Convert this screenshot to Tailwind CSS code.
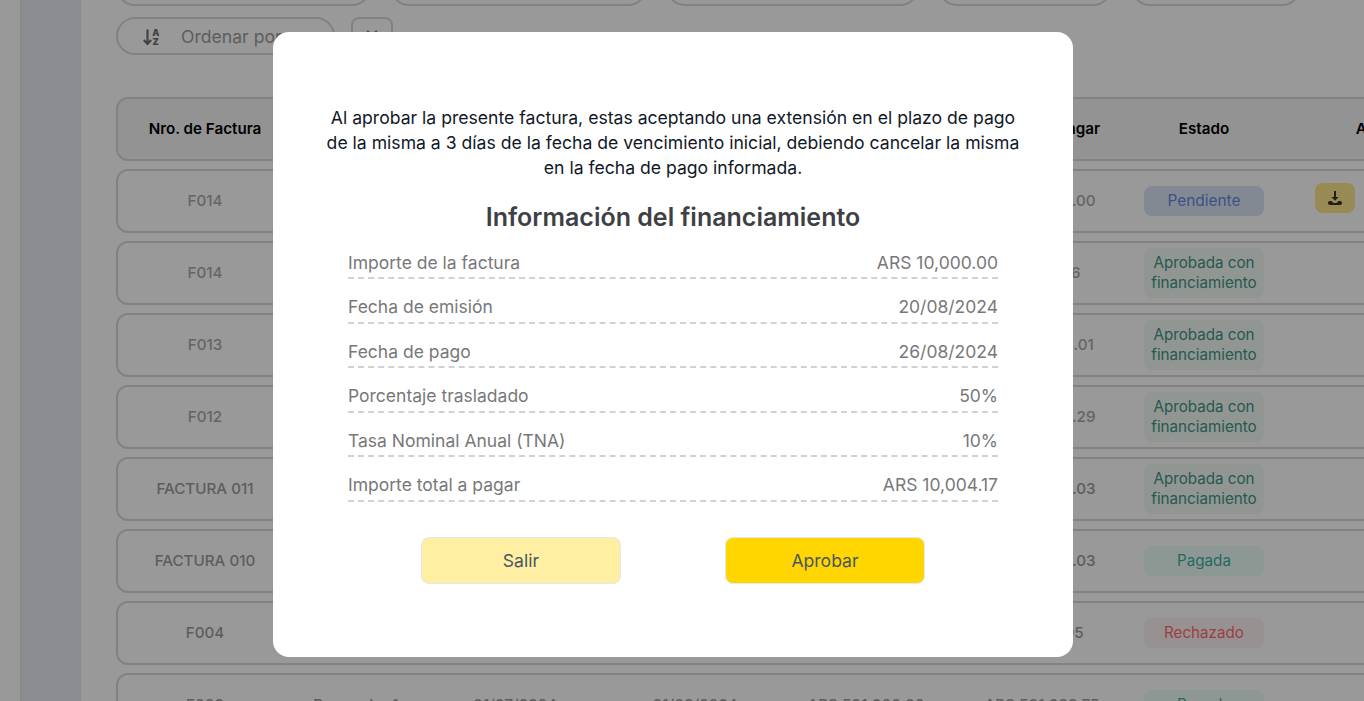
<!DOCTYPE html>
<html lang="es">
  <head>
    <meta charset="UTF-8" />
    <title>Facturas</title>
    <script src="https://cdn.jsdelivr.net/npm/@tailwindcss/browser@4"></script>
  </head>
  <body class="font-['Inter',sans-serif] bg-white">
    <div class="relative flex h-[701px] w-[1364px] overflow-hidden bg-white">
      <!-- sidebar -->
      <div class="w-[20px] shrink-0 bg-white"></div>
      <aside class="w-[61px] shrink-0 border-l border-[#dfdfdf] bg-[#e8eaf0]"></aside>

      <main class="-mt-[32px] flex-1 pl-[35px]">
        <!-- filters -->
        <div class="flex gap-[19px]">
          <div class="h-[38px] w-[255px] rounded-full border-2 border-[#d9d9d9]"></div>
          <div class="h-[38px] w-[257px] rounded-full border-2 border-[#d9d9d9]"></div>
          <div class="h-[38px] w-[253px] rounded-full border-2 border-[#d9d9d9]"></div>
          <div class="h-[38px] w-[174px] rounded-full border-2 border-[#d9d9d9]"></div>
          <div class="h-[38px] w-[170px] rounded-full border-2 border-[#d9d9d9]"></div>
        </div>
        <div class="mt-[11px] flex gap-[16px]">
          <div class="flex h-[38px] w-[219px] items-center rounded-full border-2 border-[#d9d9d9] pl-[25px] pt-[2px] text-[17.6px] text-[#9b9b9b]">
            <svg class="h-[18px] w-[18px] text-[#6e6e6e]" viewBox="0 0 18 18" fill="none">
              <path d="M4.5 1.5v14.5M0.8 12l3.7 4 3.7-4" stroke="currentColor" stroke-width="2.2" />
              <text x="9.2" y="8" font-size="9" font-weight="900" fill="currentColor">A</text>
              <text x="9.6" y="17" font-size="9" font-weight="900" fill="currentColor">Z</text>
            </svg>
            <span class="ml-[20px]">Ordenar por</span>
          </div>
          <div class="flex h-[38px] w-[42px] items-center justify-center rounded-lg border-2 border-[#d9d9d9] pb-[4px] text-2xl text-[#8a8a8a]">×</div>
        </div>

        <!-- table -->
        <div class="mt-[42px] flex w-[1390px] flex-col gap-[8px] text-[15.2px]">
          <div class="grid h-[64px] grid-cols-[174px_128px_190px_170px_172px_180px_144px_228px] items-center rounded-xl border-2 border-[#d9d9d9] bg-[#f6f6f6] text-center font-semibold text-black">
            <div>Nro. de Factura</div>
            <div>Proveedor</div>
            <div>Fecha de emisión</div>
            <div>Fecha de pago</div>
            <div>Importe</div>
            <div>Importe a pagar</div>
            <div>Estado</div>
            <div>Acciones</div>
          </div>

          <div class="grid h-[64px] grid-cols-[174px_128px_190px_170px_172px_180px_144px_228px] items-center rounded-xl border-2 border-[#d9d9d9] text-center font-medium text-[#a8a8a8]">
            <div>F014</div>
            <div>Proveedor 1</div>
            <div>20/08/2024</div>
            <div>26/08/2024</div>
            <div>ARS 10,000.00</div>
            <div>ARS 10,000.00</div>
            <div class="flex justify-center"><span class="w-[120px] shrink-0 rounded-lg bg-[#dbe4f4] py-[5px] text-[15.4px] font-normal leading-5 text-[#6488e0]">Pendiente</span></div>
            <div class="pl-[39px] text-left">
              <div class="mb-[6px] flex h-[30px] w-[40px] items-center justify-center rounded-lg bg-[#fde68a]">
                <svg class="h-[16px] w-[16px] text-[#333]" viewBox="0 0 16 16" fill="currentColor">
                  <path d="M7 1h2v6h2.6L8 10.8 4.4 7H7z" />
                  <path d="M1 13c0-1.2.8-2 2-2h1.5L6.5 13h3l2-2H13c1.2 0 2 .8 2 2s-.8 2-2 2H3c-1.2 0-2-.8-2-2z" />
                </svg>
              </div>
            </div>
          </div>

          <div class="grid h-[64px] grid-cols-[174px_128px_190px_170px_172px_180px_144px_228px] items-center rounded-xl border-2 border-[#d9d9d9] text-center font-medium text-[#a8a8a8]">
            <div>F014</div>
            <div>Proveedor 1</div>
            <div>20/08/2024</div>
            <div>26/08/2024</div>
            <div>ARS 10,000.00</div>
            <div>ARS 5,046</div>
            <div class="flex justify-center"><span class="w-[120px] shrink-0 rounded-lg bg-[#f2faf4] py-[5px] font-normal leading-5 text-[#3f9488]">Aprobada con financiamiento</span></div>
            <div></div>
          </div>

          <div class="grid h-[64px] grid-cols-[174px_128px_190px_170px_172px_180px_144px_228px] items-center rounded-xl border-2 border-[#d9d9d9] text-center font-medium text-[#a8a8a8]">
            <div>F013</div>
            <div>Proveedor 1</div>
            <div>19/08/2024</div>
            <div>25/08/2024</div>
            <div>ARS 10,000.00</div>
            <div>ARS 10,004.01</div>
            <div class="flex justify-center"><span class="w-[120px] shrink-0 rounded-lg bg-[#f2faf4] py-[5px] font-normal leading-5 text-[#3f9488]">Aprobada con financiamiento</span></div>
            <div></div>
          </div>

          <div class="grid h-[64px] grid-cols-[174px_128px_190px_170px_172px_180px_144px_228px] items-center rounded-xl border-2 border-[#d9d9d9] text-center font-medium text-[#a8a8a8]">
            <div>F012</div>
            <div>Proveedor 1</div>
            <div>19/08/2024</div>
            <div>25/08/2024</div>
            <div>ARS 10,000.00</div>
            <div>ARS 10,004.29</div>
            <div class="flex justify-center"><span class="w-[120px] shrink-0 rounded-lg bg-[#f2faf4] py-[5px] font-normal leading-5 text-[#3f9488]">Aprobada con financiamiento</span></div>
            <div></div>
          </div>

          <div class="grid h-[64px] grid-cols-[174px_128px_190px_170px_172px_180px_144px_228px] items-center rounded-xl border-2 border-[#d9d9d9] text-center font-medium text-[#9c9c9c]">
            <div>FACTURA 011</div>
            <div>Proveedor 1</div>
            <div>15/08/2024</div>
            <div>21/08/2024</div>
            <div>ARS 10,000.00</div>
            <div>ARS 10,004.03</div>
            <div class="flex justify-center"><span class="w-[120px] shrink-0 rounded-lg bg-[#f2faf4] py-[5px] font-normal leading-5 text-[#3f9488]">Aprobada con financiamiento</span></div>
            <div></div>
          </div>

          <div class="grid h-[64px] grid-cols-[174px_128px_190px_170px_172px_180px_144px_228px] items-center rounded-xl border-2 border-[#d9d9d9] text-center font-medium text-[#9c9c9c]">
            <div>FACTURA 010</div>
            <div>Proveedor 1</div>
            <div>15/08/2024</div>
            <div>21/08/2024</div>
            <div>ARS 10,000.00</div>
            <div>ARS 10,004.03</div>
            <div class="flex justify-center"><span class="w-[120px] shrink-0 rounded-lg bg-[#ecfdf9] py-[5px] font-normal leading-5 text-[#3aafa6]">Pagada</span></div>
            <div></div>
          </div>

          <div class="grid h-[64px] grid-cols-[174px_128px_190px_170px_172px_180px_144px_228px] items-center rounded-xl border-2 border-[#d9d9d9] text-center font-medium text-[#9c9c9c]">
            <div>F004</div>
            <div>Proveedor 1</div>
            <div>01/08/2024</div>
            <div>01/09/2024</div>
            <div>ARS 1,000.00</div>
            <div>ARS 10,005</div>
            <div class="flex justify-center"><span class="w-[120px] shrink-0 rounded-lg bg-[#fef2f2] py-[5px] font-normal leading-5 text-[#ff6b70]">Rechazado</span></div>
            <div></div>
          </div>

          <div class="grid h-[64px] grid-cols-[174px_128px_190px_170px_172px_180px_144px_228px] items-center rounded-xl border-2 border-[#d9d9d9] text-center font-medium text-[#9c9c9c]">
            <div>F003</div>
            <div>Proveedor 1</div>
            <div>01/07/2024</div>
            <div>01/08/2024</div>
            <div>ARS 501,000.00</div>
            <div>ARS 501,233.75</div>
            <div class="flex justify-center"><span class="w-[120px] shrink-0 rounded-lg bg-[#ecfdf9] py-[5px] font-normal leading-5 text-[#3aafa6]">Pagada</span></div>
            <div></div>
          </div>
        </div>
      </main>

      <!-- overlay + modal -->
      <div class="absolute inset-0 bg-black/40">
        <div class="ml-[273px] mt-[32px] flex h-[625px] w-[800px] flex-col items-center rounded-2xl bg-white pt-[73px]">
          <p class="w-[710px] text-center text-[17.6px] leading-[25px] text-[#111827]">
            Al aprobar la presente factura, estas aceptando una extensión en el plazo de pago de la misma a 3 días de la fecha de vencimiento inicial, debiendo cancelar la misma en la fecha de pago informada.
          </p>
          <h2 class="mt-[21px] text-[25px] leading-8 font-semibold text-[#3f3f46]">Información del financiamiento</h2>
          <div class="mt-[1.6px] w-[650px] text-[17.5px] leading-6 text-[#78787a]">
            <div class="flex h-[44.5px] items-end justify-between border-b-2 border-dashed border-[#d1d1d1] pb-[2.4px]"><span>Importe de la factura</span><span>ARS 10,000.00</span></div>
            <div class="flex h-[44.5px] items-end justify-between border-b-2 border-dashed border-[#d1d1d1] pb-[2.4px]"><span>Fecha de emisión</span><span>20/08/2024</span></div>
            <div class="flex h-[44.5px] items-end justify-between border-b-2 border-dashed border-[#d1d1d1] pb-[2.4px]"><span>Fecha de pago</span><span>26/08/2024</span></div>
            <div class="flex h-[44.5px] items-end justify-between border-b-2 border-dashed border-[#d1d1d1] pb-[2.4px]"><span>Porcentaje trasladado</span><span>50%</span></div>
            <div class="flex h-[44.5px] items-end justify-between border-b-2 border-dashed border-[#d1d1d1] pb-[2.4px]"><span>Tasa Nominal Anual (TNA)</span><span>10%</span></div>
            <div class="flex h-[44.5px] items-end justify-between border-b-2 border-dashed border-[#d1d1d1] pb-[2.4px]"><span>Importe total a pagar</span><span>ARS 10,004.17</span></div>
          </div>
          <div class="mt-[35.4px] flex gap-[104px]">
            <button class="h-[47px] w-[200px] rounded-lg border border-[#e5e7eb] bg-[#feefa3] pt-[1px] text-[17.6px] text-[#4b5563]">Salir</button>
            <button class="h-[47px] w-[200px] rounded-lg border border-[#e5e7eb] bg-[#ffd600] pt-[1px] text-[17.6px] text-[#4b5563]">Aprobar</button>
          </div>
        </div>
      </div>
    </div>
  </body>
</html>
